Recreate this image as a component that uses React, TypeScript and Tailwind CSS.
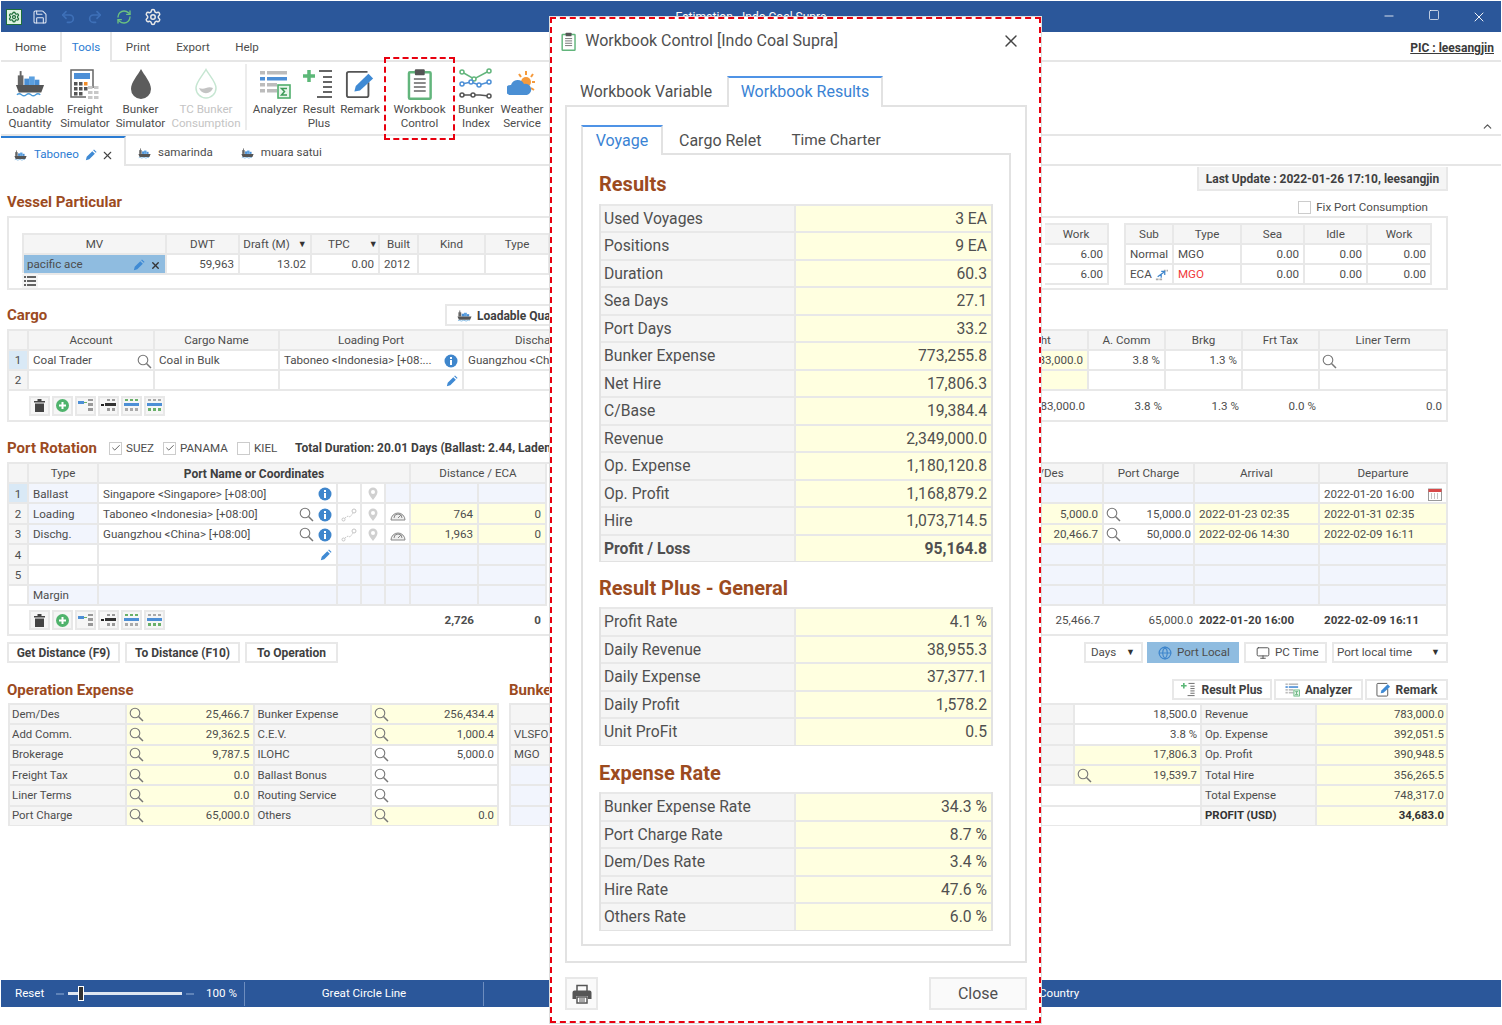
import React from "react";
import { Settings, RefreshCw, Save, Undo2, Redo2, Minus, Square, X, ChevronUp, Monitor, Globe, Check } from "lucide-react";

type CP = { className?: string; children?: React.ReactNode };

const Ship = ({ w = 32, h = 26 }: { w?: number; h?: number }) => (
  <svg width={w} height={h} viewBox="0 0 32 26" preserveAspectRatio="none">
    <rect x="5" y="1" width="2" height="8" fill="#666" />
    <rect x="3" y="5" width="6" height="9" fill="#666" />
    <rect x="10" y="8" width="5" height="6" fill="#4a8fd4" />
    <rect x="15" y="6" width="6" height="8" fill="#5ba0e0" />
    <rect x="21" y="9" width="5" height="5" fill="#4a8fd4" />
    <path d="M1 14H31L28 21H4Z" fill="#555" />
    <path d="M2 23q2.500-2 5 0t5 0 5 0 5 0 5 0" stroke="#4a9ad8" strokeWidth="1.400" fill="none" />
  </svg>
);
const Calc = () => (
  <svg width="32" height="32" viewBox="0 0 32 32">
    <path d="M24 20V2H2V29H17" fill="#fff" stroke="#666" strokeWidth="1.500" />
    <rect x="5" y="5" width="16" height="6" fill="#4d8fd6" />
    {[5, 10, 15].map((x) => [14, 19].map((y) => <rect key={`${x}${y}`} x={x} y={y} width="3.500" height="3.500" fill={x === 15 && y === 14 ? "#f28c28" : "#555"} />))}
    <rect x="5" y="24" width="3.500" height="3.500" fill="#555" />
    <rect x="10" y="24" width="3.500" height="3.500" fill="#555" />
    {[19, 25].map((x) => [19, 24, 29].map((y) => <rect key={`g${x}${y}`} x={x} y={y - 1} width="4.500" height="3" fill="#c8c8c8" />))}
  </svg>
);
const Drop = ({ light }: { light?: boolean }) =>
  light ? (
    <svg width="24" height="32" viewBox="0 0 24 32">
      <path d="M12 1.500C9 7 2 14 2 20a10 10 0 0 0 20 0C22 14 15 7 12 1.500Z" fill="#fff" stroke="#c6e6d2" strokeWidth="1.500" />
      <path d="M5 20q3.500 1.500 7 0t7 0a7.500 8 0 0 1-14 0Z" fill="#c4c4c4" />
    </svg>
  ) : (
    <svg width="24" height="32" viewBox="0 0 24 32">
      <path d="M12 1C9 7 2 14 2 21a10 10 0 0 0 20 0C22 14 15 7 12 1Z" fill="#5c5c5c" />
    </svg>
  );
const AnalyzerIcon = ({ s = 32 }: { s?: number }) => (
  <svg width={s} height={s} viewBox="0 0 32 32">
    {[3, 9, 15, 21].map((y, i) => (
      <g key={y}>
        <rect x="1" y={y} width="5" height="3.500" fill={i === 1 ? "#4d8fd6" : "#bcbcbc"} />
        <rect x="8" y={y} width={i > 1 ? 10 : 20} height="3.500" fill={i === 1 ? "#4d8fd6" : "#bcbcbc"} />
      </g>
    ))}
    <rect x="19" y="17" width="12" height="13" fill="#e8f6ec" stroke="#4fae6c" strokeWidth="1.600" />
    <path d="M28 20.500H22.500L25.500 23.500 22.500 27H28" fill="none" stroke="#3c9a58" strokeWidth="1.500" />
  </svg>
);
const ResultPlusIcon = ({ s = 32 }: { s?: number }) => (
  <svg width={s} height={s} viewBox="0 0 32 32">
    <path d="M6 2v12M0 8h12" stroke="#5cb878" strokeWidth="3.500" />
    <path d="M16 3h13M20 9h9M20 14h9M20 19h9M20 24h9M14 29h15" stroke="#666" strokeWidth="2" />
  </svg>
);
const RemarkIcon = ({ s = 32 }: { s?: number }) => (
  <svg width={s} height={s} viewBox="0 0 32 32">
    <path d="M25 14V28a2 2 0 0 1-2 2H4a2 2 0 0 1-2-2V5a2 2 0 0 1 2-2h20" fill="none" stroke="#555" strokeWidth="2" />
    <path d="M10 24l1.500-6L25 5l5 5L16 23Z" fill="#3f8ad4" />
  </svg>
);
const Clip = ({ s = 32 }: { s?: number }) => (
  <svg width={s * 0.8} height={s} viewBox="0 0 26 32">
    <rect x="2" y="4" width="22" height="27" rx="1" fill="#fff" stroke="#62b57c" strokeWidth="2.500" />
    <rect x="8" y="1" width="10" height="6" rx="1" fill="#555" />
    <path d="M7 11h12M7 15h12M7 19h12M7 23h12" stroke="#666" strokeWidth="1.500" />
  </svg>
);
const BunkerIdx = () => (
  <svg width="34" height="32" viewBox="0 0 34 32" fill="#fff" strokeWidth="1.500">
    <path d="M3 4l12 7 15-8" stroke="#62b57c" fill="none" />
    <path d="M3 16l9-2 8 3 10-3" stroke="#4d8fd6" fill="none" />
    <path d="M3 27h18l9 1" stroke="#555" fill="none" />
    {[[3, 4], [15, 11], [30, 3]].map(([x, y]) => <circle key={x} cx={x} cy={y} r="2" stroke="#62b57c" />)}
    {[[3, 16], [12, 14], [20, 17], [30, 14]].map(([x, y]) => <circle key={x} cx={x} cy={y} r="2" stroke="#4d8fd6" />)}
    {[[3, 27], [14, 27], [30, 28]].map(([x, y]) => <circle key={x} cx={x} cy={y} r="2" stroke="#555" />)}
  </svg>
);
const Weather = () => (
  <svg width="30" height="30" viewBox="0 0 30 30">
    <circle cx="19" cy="13" r="5" fill="#f59a3c" />
    <path d="M19 2v4M28 13h-3M12 5l2 3M26 5l-2 3M27 21l-3-2" stroke="#f59a3c" strokeWidth="2" />
    <path d="M3 26a5 5 0 0 1 1-10 7 7 0 0 1 13-1 5.500 5.500 0 0 1 3 11Z" fill="#4a8fd4" />
  </svg>
);
const Pencil = ({ s = 12 }: { s?: number }) => (
  <svg width={s} height={s} viewBox="0 0 14 14" className="shrink-0">
    <path d="M1 13l1-4 6.500-6.500 3 3L5 12Z M9.500 1.500l1-1 3 3-1 1Z" fill="#3f8ad4" />
  </svg>
);
const Info = () => (
  <svg width="14" height="14" viewBox="0 0 14 14" className="shrink-0">
    <circle cx="7" cy="7" r="6.500" fill="#3f86cc" />
    <rect x="6" y="6" width="2" height="5" fill="#fff" />
    <rect x="6" y="3" width="2" height="2" fill="#fff" />
  </svg>
);
const Mag = () => (
  <svg width="15" height="15" viewBox="0 0 15 15" fill="none" stroke="#777" className="shrink-0">
    <circle cx="6" cy="6" r="4.800" strokeWidth="1.100" />
    <path d="M9.500 9.500L14 14" strokeWidth="1.500" />
  </svg>
);
const Pin = () => (
  <svg width="12" height="14" viewBox="0 0 12 14">
    <path d="M6 13C4 10 1.500 8 1.500 5a4.500 4.500 0 0 1 9 0C10.500 8 8 10 6 13Z" fill="#d0d0d0" />
    <circle cx="6" cy="5" r="2" fill="#fff" />
  </svg>
);
const Route = () => (
  <svg width="16" height="14" viewBox="0 0 16 14" fill="none" stroke="#c4c4c4">
    <circle cx="2.500" cy="11.500" r="1.500" />
    <circle cx="13" cy="3" r="2" />
    <path d="M4 10l3-2 2 1 3-4" strokeDasharray="1.500 1" />
  </svg>
);
const Gauge = () => (
  <svg width="16" height="14" viewBox="0 0 16 14" fill="none" stroke="#888">
    <path d="M1 12a7 7 0 1 1 14 0Z" fill="#eee" />
    <path d="M4 10a4 4 0 0 1 8 0M8 10l3-3" />
  </svg>
);
const Calendar = () => (
  <svg width="14" height="14" viewBox="0 0 14 14">
    <rect x="0.500" y="2" width="13" height="11.500" fill="#fff" stroke="#999" />
    <rect x="0.500" y="2" width="13" height="3" fill="#d84a4a" />
    <path d="M3 7h1M6 7h1M9 7h1M3 9h1M6 9h1M9 9h1M3 11h1M6 11h1M9 11h1" stroke="#888" />
  </svg>
);
const PrinterIcon = () => (
  <svg width="20" height="20" viewBox="0 0 20 20">
    <path d="M5 7V1.500h10V7" fill="none" stroke="#555" strokeWidth="1.500" />
    <path d="M2.500 6.500h15a2 2 0 0 1 2 2V15h-3.500v-3H4v3H0.500V8.500a2 2 0 0 1 2-2Z" fill="#555" />
    <path d="M5 13h10v6H5Z" fill="#fff" stroke="#555" strokeWidth="1.500" />
    <path d="M7 15h6M7 17h6" stroke="#555" />
  </svg>
);

const Cell = ({ className = "", children }: CP) => (
  <div className={`flex items-center shrink-0 h-full px-[4px] pt-[2px] overflow-hidden whitespace-nowrap border-r-2 border-b-2 border-[#e8e8e8] ${className}`}>{children}</div>
);
const Row = ({ left, right, h = "h-[20px]" }: { left: React.ReactNode; right: React.ReactNode; h?: string }) => (
  <div className={`flex justify-between ${h}`}>
    <div className="flex h-full">{left}</div>
    <div className="flex h-full">{right}</div>
  </div>
);
const Heading = ({ className = "", children }: CP) => <div className={`font-bold text-[15px] leading-[18px] text-[#9c4b1f] ${className}`}>{children}</div>;
const Btn = ({ className = "", children }: CP) => (
  <div className={`flex items-center gap-[5px] border-2 border-[#e8e8e8] bg-white font-bold text-[12px] text-[#3f3f3f] whitespace-nowrap ${className}`}>{children}</div>
);
const CheckBox = ({ on }: { on?: boolean }) => (
  <div className="flex items-center justify-center w-[13px] h-[13px] border border-[#ccc] bg-white">{on && <Check size={10} strokeWidth={2} className="text-[#444]" />}</div>
);
const Arrow = () => <span className="text-[9px] text-[#333]">▼</span>;

const Tools = () => {
  const box = "flex items-center justify-center w-[21px] h-[20px] border-2 border-[#e8e8e8] bg-[#f6f6f6]";
  const bl = "#4d8fd6";
  return (
    <div className="flex gap-[2px]">
      <div className={box}>
        <svg width="11" height="13" viewBox="0 0 11 13"><path d="M0 2h11v1.500H0ZM3.500 0h4v2h-4ZM1 4.500h9V13H1Z" fill="#444" /></svg>
      </div>
      <div className={box}>
        <svg width="13" height="13" viewBox="0 0 13 13"><circle cx="6.500" cy="6.500" r="6.500" fill="#4fb36c" /><path d="M6.500 3v7M3 6.500h7" stroke="#fff" strokeWidth="2" /></svg>
      </div>
      <div className={box}>
        <svg width="15" height="13" viewBox="0 0 15 13"><path d="M0 2h6v3H0Z" fill={bl} /><path d="M6 3.500h3" stroke="#6ab06a" /><path d="M10 0h5v2h-5ZM10 4h5v3h-5ZM10 9h5v3h-5Z" fill="#999" /></svg>
      </div>
      <div className={box}>
        <svg width="15" height="13" viewBox="0 0 15 13"><path d="M0 5h3v2H0Z" fill="#222" /><path d="M4 4h11v3H4Z" fill="#333" /><path d="M6 0h3v2H6ZM11 0h3v2h-3ZM6 9h3v3H6ZM11 9h3v3h-3Z" fill="#999" /></svg>
      </div>
      <div className={box}>
        <svg width="15" height="13" viewBox="0 0 15 13"><path d="M1 0h3v2H1ZM6 0h3v2H6ZM11 0h3v2h-3Z" fill="#6ab06a" /><path d="M0 4h15v3H0Z" fill={bl} /><path d="M1 9h3v3H1ZM6 9h3v3H6ZM11 9h3v3h-3Z" fill="#aaa" /></svg>
      </div>
      <div className={box}>
        <svg width="15" height="13" viewBox="0 0 15 13"><path d="M1 0h3v2H1ZM6 0h3v2H6ZM11 0h3v2h-3Z" fill="#aaa" /><path d="M0 4h15v3H0Z" fill={bl} /><path d="M1 9h3v3H1ZM6 9h3v3H6ZM11 9h3v3h-3Z" fill="#6ab06a" /></svg>
      </div>
    </div>
  );
};

const RibbonItem = ({ className = "", icon, a, b, dim }: { className?: string; icon: React.ReactNode; a: string; b: string; dim?: boolean }) => (
  <div className={`flex flex-col items-center shrink-0 ${className}`}>
    <div className="flex items-center justify-center h-[38px] pt-[2px]">{icon}</div>
    <div className={`text-center leading-[14px] whitespace-nowrap ${dim ? "text-[#c4c4c4]" : ""}`}>
      {a}
      <br />
      {b}
    </div>
  </div>
);

const H = "bg-[#f5f5f5] justify-center";
const Y = "bg-[#ffffe0] justify-end";
const B = "bg-[#f2f5fd]";
const R = "justify-end";

const ModalTable = ({ className, rows }: { className: string; rows: [string, string, boolean?][] }) => (
  <div className={`flex flex-col w-[394px] border-x-2 border-[#e2e2e2] shadow-[0_1px_0_#e2e2e2] text-[15.7px] text-[#505050] ${className}`}>
    {rows.map(([l, v, b]) => (
      <div key={l} className={`flex flex-1 min-h-0 border-t-2 border-[#e8e8e8] ${b ? "font-bold" : ""}`}>
        <div className="flex items-center w-[195px] pl-[3px] bg-[#f5f5f5] border-r-2 border-[#e8e8e8]">{l}</div>
        <div className="flex flex-1 items-center justify-end pr-[4px] bg-[#ffffe0]">{v}</div>
      </div>
    ))}
  </div>
);
const ModalHeading = ({ className, children }: { className: string; children: React.ReactNode }) => (
  <div className={`flex items-end font-bold text-[20px] leading-[24px] text-[#9c4b1f] ${className}`}>{children}</div>
);

const OpRow = ({ a, b, c, d, dWhite }: { a: string; b: string; c: string; d: string; dWhite?: boolean }) => {
  const v = "flex flex-1 items-center justify-between h-full pl-[2px] pr-[3px] border-r-2 border-[#e8e8e8]";
  return (
    <div className="flex flex-1 min-h-0 border-t-2 border-[#e8e8e8]">
      <div className="flex items-center w-[117px] pl-[2px] bg-[#f5f5f5] border-r-2 border-[#e8e8e8]">{a}</div>
      <div className={`${v} max-w-[128px] bg-[#ffffe0]`}>
        <Mag />
        {b}
      </div>
      <div className="flex items-center w-[117px] pl-[3px] bg-[#f5f5f5] border-r-2 border-[#e8e8e8]">{c}</div>
      <div className={`${v} ${dWhite ? "bg-white" : "bg-[#ffffe0]"}`}>
        <Mag />
        {d}
      </div>
    </div>
  );
};

export default function App() {
  return (
    <div className="relative w-[1502px] h-[1025px] overflow-hidden bg-white pt-px pl-px text-[#4d4d4d] text-[11.6px] [font-family:Roboto,sans-serif]">
      <div className="flex flex-col w-[1500px] h-[1006px]">
        {/* title bar */}
        <div className="flex items-center shrink-0 h-[31px] bg-[#2b579a] text-white">
          <div className="flex items-center pl-[5px]">
            <div className="flex items-center justify-center w-[16px] h-[16px] bg-[#dff2e2] border border-[#1e6e3a]">
              <Settings size={12} strokeWidth={2.500} className="text-[#1e6e3a]" />
            </div>
            <Save size={16} strokeWidth={1.600} className="ml-[10px] text-[#dfe6f2]" />
            <Undo2 size={16} strokeWidth={2.500} className="ml-[12px] text-[#3e70b8]" />
            <Redo2 size={16} strokeWidth={2.500} className="ml-[11px] text-[#3e70b8]" />
            <RefreshCw size={16} strokeWidth={2} className="ml-[13px] text-[#6cc27f]" />
            <Settings size={18} strokeWidth={2} className="ml-[12px] text-[#e8e8e8]" />
          </div>
          <div className="flex-1 pr-[26px] text-center text-[12px]">Estimation - Indo Coal Supra</div>
          <div className="flex w-[135px]">
            <div className="flex flex-1 justify-center"><Minus size={14} strokeWidth={1.400} /></div>
            <div className="flex flex-1 justify-center"><Square size={12} strokeWidth={1.400} /></div>
            <div className="flex flex-1 justify-center"><X size={16} strokeWidth={1.400} /></div>
          </div>
        </div>
        {/* ribbon tabs */}
        <div className="flex shrink-0 items-stretch justify-between h-[30px] border-b-2 border-[#e6e6e6]">
          <div className="flex items-center">
            <div className="w-[59px] pt-[3px] text-center">Home</div>
            <div className="flex items-center justify-center self-start w-[52px] h-[30px] pt-[2px] border-x-2 border-[#e6e6e6] bg-white text-[#2b7cd3]">Tools</div>
            <div className="w-[52px] pt-[3px] text-center">Print</div>
            <div className="w-[58px] pt-[3px] text-center">Export</div>
            <div className="w-[50px] pt-[3px] text-center">Help</div>
          </div>
          <div className="flex items-center pr-[7px] pt-[3px] font-bold text-[12px] underline text-[#3a3a3a]">PIC : leesangjin</div>
        </div>
        {/* ribbon */}
        <div className="flex shrink-0 h-[74px] border-b-2 border-[#e6e6e6] pt-[2px] pl-[2px]">
          <RibbonItem className="w-[54px]" icon={<Ship w={30} h={28} />} a="Loadable" b="Quantity" />
          <RibbonItem className="w-[56px]" icon={<Calc />} a="Freight" b="Simulator" />
          <RibbonItem className="w-[55px]" icon={<Drop />} a="Bunker" b="Simulator" />
          <RibbonItem className="w-[76px]" icon={<Drop light />} a="TC Bunker" b="Consumption" dim />
          <div className="w-[2px] h-[66px] mx-px bg-[#ececec]" />
          <RibbonItem className="w-[54px]" icon={<AnalyzerIcon />} a="Analyzer" b="" />
          <RibbonItem className="w-[34px]" icon={<ResultPlusIcon />} a="Result" b="Plus" />
          <RibbonItem className="w-[48px]" icon={<RemarkIcon s={30} />} a="Remark" b="" />
          <RibbonItem className="w-[71px]" icon={<Clip />} a="Workbook" b="Control" />
          <RibbonItem className="w-[42px]" icon={<BunkerIdx />} a="Bunker" b="Index" />
          <RibbonItem className="w-[50px]" icon={<Weather />} a="Weather" b="Service" />
          <div className="flex flex-1 items-end justify-end pr-[7px] pb-[1px]">
            <ChevronUp size={13} strokeWidth={2.200} className="text-[#555]" />
          </div>
        </div>
        {/* document tabs */}
        <div className="flex shrink-0 items-stretch h-[30px] border-b-2 border-[#e6e6e6]">
          <div className="flex items-center w-[125px] h-[30px] pl-[13px] pt-[6px] border-t-2 border-r-2 border-t-[#2b7cd3] border-r-[#e6e6e6] bg-white">
            <Ship w={13} h={11} />
            <span className="ml-[7px] text-[#2b7cd3]">Taboneo</span>
            <span className="ml-[6px]"><Pencil /></span>
            <X size={13} strokeWidth={2} className="ml-[4px] text-[#444]" />
          </div>
          <div className="flex items-center pl-[12px] pt-[6px]"><Ship w={13} h={11} /><span className="ml-[7px]">samarinda</span></div>
          <div className="flex items-center pl-[28px] pt-[6px]"><Ship w={13} h={11} /><span className="ml-[7px]">muara satui</span></div>
        </div>

        {/* main */}
        <div className="flex flex-col flex-1 min-h-0 pl-[6px] pr-[53px]">
          {/* vessel */}
          <div className="flex justify-between h-[50px]">
            <div className="flex items-end pb-[5px]"><Heading>Vessel Particular</Heading></div>
            <div className="flex flex-col items-end">
              <div className="flex items-center justify-center w-[251px] h-[25px] mt-px pt-[3px] border-2 border-[#e8e8e8] border-t-0 bg-[#f5f5f5] font-bold text-[12px] text-[#3f3f3f]">Last Update : 2022-01-26 17:10, leesangjin</div>
              <div className="flex items-center gap-[5px] mt-[8px] pr-[20px]"><CheckBox />Fix Port Consumption</div>
            </div>
          </div>
          <div className="flex justify-between h-[74px] border-2 border-[#e8e8e8]">
            <div className="flex flex-col pl-[13px] pt-[15px]">
              <div className="h-[40px] border-t-2 border-l-2 border-[#e8e8e8]">
                <div className="flex h-[20px]">
                  <Cell className={`w-[143px] ${H}`}>MV</Cell>
                  <Cell className={`w-[73px] ${H}`}>DWT</Cell>
                  <Cell className={`w-[72px] ${H} gap-[8px]`}>Draft (M)<Arrow /></Cell>
                  <Cell className="w-[68px] bg-[#f5f5f5] !pl-[16px] gap-[19px]">TPC<Arrow /></Cell>
                  <Cell className={`w-[39px] ${H}`}>Built</Cell>
                  <Cell className={`w-[67px] ${H}`}>Kind</Cell>
                  <Cell className={`w-[64px] ${H}`}>Type</Cell>
                </div>
                <div className="flex h-[20px]">
                  <Cell className="w-[143px] !pl-[3px] bg-[#8fbce0] justify-between">pacific ace<span className="flex items-center gap-[5px]"><Pencil /><X size={11} strokeWidth={3} className="text-[#333]" /></span></Cell>
                  <Cell className={`w-[73px] ${R}`}>59,963</Cell>
                  <Cell className={`w-[72px] ${R}`}>13.02</Cell>
                  <Cell className={`w-[68px] ${R}`}>0.00</Cell>
                  <Cell className="w-[39px]">2012</Cell>
                  <Cell className="w-[67px]" />
                  <Cell className="w-[64px]" />
                </div>
              </div>
              <div className="flex items-center justify-center w-[16px] h-[14px] mt-px bg-[#f5f5f5]">
                <svg width="12" height="10" viewBox="0 0 12 10"><path d="M0 1h2M3 1h9M0 5h2M3 5h9M0 9h2M3 9h9" stroke="#333" strokeWidth="1.500" /></svg>
              </div>
            </div>
            <div className="flex items-start gap-[15px] pt-[5px] pr-[14px]">
              <div className="border-t-2 border-[#e8e8e8]">
                <div className="flex h-[20px]"><Cell className={`w-[64px] ${H}`}>Work</Cell></div>
                <div className="flex h-[20px]"><Cell className={`w-[64px] ${R}`}>6.00</Cell></div>
                <div className="flex h-[20px]"><Cell className={`w-[64px] ${R}`}>6.00</Cell></div>
              </div>
              <div className="border-t-2 border-l-2 border-[#e8e8e8]">
                <div className="flex h-[20px]">
                  <Cell className={`w-[48px] ${H}`}>Sub</Cell>
                  <Cell className={`w-[68px] ${H}`}>Type</Cell>
                  <Cell className={`w-[63px] ${H}`}>Sea</Cell>
                  <Cell className={`w-[63px] ${H}`}>Idle</Cell>
                  <Cell className={`w-[64px] ${H}`}>Work</Cell>
                </div>
                <div className="flex h-[20px]">
                  <Cell className="w-[48px]">Normal</Cell>
                  <Cell className="w-[68px]">MGO</Cell>
                  <Cell className={`w-[63px] ${R}`}>0.00</Cell>
                  <Cell className={`w-[63px] ${R}`}>0.00</Cell>
                  <Cell className={`w-[64px] ${R}`}>0.00</Cell>
                </div>
                <div className="flex h-[20px]">
                  <Cell className="w-[48px] gap-[3px]">ECA
                    <svg width="15" height="14" viewBox="0 0 15 14"><path d="M1 11h3v2H1ZM5 11h3v2H5ZM10 1h2v2h-2ZM13 1h2v2h-2Z" fill="#aaa" /><path d="M3 9l7-5M7 3h4v4M7 10V6" stroke="#3f86cc" fill="none" strokeWidth="1.400" /></svg>
                  </Cell>
                  <Cell className="w-[68px] text-[#f03a3a]">MGO</Cell>
                  <Cell className={`w-[63px] ${R}`}>0.00</Cell>
                  <Cell className={`w-[63px] ${R}`}>0.00</Cell>
                  <Cell className={`w-[64px] ${R}`}>0.00</Cell>
                </div>
              </div>
            </div>
          </div>

          {/* cargo */}
          <div className="flex items-end h-[39px]">
            <Heading className="w-[438px] pb-[5px]">Cargo</Heading>
            <Btn className="w-[150px] h-[22px] mb-[3px] pl-[10px] pt-[2px]"><Ship w={15} h={12} />Loadable Quantity</Btn>
          </div>
          <div className="flex flex-col h-[93px] border-2 border-[#e8e8e8]">
            <Row
              left={<>
                <Cell className={`w-[20px] ${H}`} />
                <Cell className={`w-[126px] ${H}`}>Account</Cell>
                <Cell className={`w-[125px] ${H}`}>Cargo Name</Cell>
                <Cell className={`w-[184px] ${H}`}>Loading Port</Cell>
                <Cell className={`w-[190px] ${H}`}>Discharging Port</Cell>
              </>}
              right={<>
                <Cell className={`w-[110px] ${H}`}>Freight</Cell>
                <Cell className={`w-[77px] ${H}`}>A. Comm</Cell>
                <Cell className={`w-[77px] ${H}`}>Brkg</Cell>
                <Cell className={`w-[77px] ${H}`}>Frt Tax</Cell>
                <Cell className={`w-[126px] ${H} !border-r-0`}>Liner Term</Cell>
              </>}
            />
            <Row
              left={<>
                <Cell className="w-[20px] bg-[#d9e9f6] justify-center">1</Cell>
                <Cell className="w-[126px] justify-between !pr-[1px]">Coal Trader<Mag /></Cell>
                <Cell className="w-[125px]">Coal in Bulk</Cell>
                <Cell className="w-[184px] justify-between">Taboneo &lt;Indonesia&gt; [+08:...<Info /></Cell>
                <Cell className="w-[190px]">Guangzhou &lt;China&gt; [+08:00]</Cell>
              </>}
              right={<>
                <Cell className={`w-[110px] ${Y}`}>783,000.0</Cell>
                <Cell className={`w-[77px] ${R}`}>3.8 %</Cell>
                <Cell className={`w-[77px] ${R}`}>1.3 %</Cell>
                <Cell className="w-[77px]" />
                <Cell className="w-[126px] !border-r-0 !pl-[2px]"><Mag /></Cell>
              </>}
            />
            <Row
              left={<>
                <Cell className="w-[20px] bg-[#f5f5f5] justify-center">2</Cell>
                <Cell className="w-[126px]" />
                <Cell className="w-[125px]" />
                <Cell className="w-[184px] justify-end"><Pencil /></Cell>
                <Cell className="w-[190px]" />
              </>}
              right={<>
                <Cell className="w-[110px] bg-[#ffffe0]" />
                <Cell className="w-[77px]" />
                <Cell className="w-[77px]" />
                <Cell className="w-[77px]" />
                <Cell className="w-[126px] !border-r-0" />
              </>}
            />
            <div className="flex justify-between items-center flex-1 pl-[20px]">
              <Tools />
              <div className="flex justify-end pt-[2px]">
                <div className="w-[110px] text-right pr-[4px]">783,000.0</div>
                <div className="w-[77px] text-right pr-[4px]">3.8 %</div>
                <div className="w-[77px] text-right pr-[4px]">1.3 %</div>
                <div className="w-[77px] text-right pr-[4px]">0.0 %</div>
                <div className="w-[126px] text-right pr-[4px]">0.0</div>
              </div>
            </div>
          </div>

          {/* port rotation */}
          <div className="flex items-end h-[40px] whitespace-nowrap">
            <Heading className="w-[102px] pb-[5px]">Port Rotation</Heading>
            <div className="flex items-center gap-[4px] w-[54px] pb-[5px]"><CheckBox on />SUEZ</div>
            <div className="flex items-center gap-[4px] w-[74px] pb-[5px]"><CheckBox on />PANAMA</div>
            <div className="flex items-center gap-[4px] w-[58px] pb-[5px]"><CheckBox />KIEL</div>
            <div className="pb-[5px] font-bold text-[12px] text-[#3f3f3f]">Total Duration: 20.01 Days (Ballast: 2.44, Laden: 17.57)</div>
          </div>
          <div className="flex flex-col h-[174px] border-2 border-[#e8e8e8]">
            <Row
              left={<>
                <Cell className={`w-[20px] ${H}`} />
                <Cell className={`w-[70px] ${H}`}>Type</Cell>
                <Cell className={`w-[312px] ${H} font-bold text-[12px] text-[#3f3f3f]`}>Port Name or Coordinates</Cell>
                <Cell className={`w-[136px] ${H}`}>Distance / ECA</Cell>
              </>}
              right={<>
                <Cell className={`w-[127px] ${H}`}>Dem/Des</Cell>
                <Cell className={`w-[91px] ${H}`}>Port Charge</Cell>
                <Cell className={`w-[125px] ${H}`}>Arrival</Cell>
                <Cell className={`w-[126px] ${H} !border-r-0`}>Departure</Cell>
              </>}
            />
            <Row
              h="h-[20.4px]"
              left={<>
                <Cell className="w-[20px] bg-[#d9e9f6] justify-center">1</Cell>
                <Cell className={`w-[70px] ${B}`}>Ballast</Cell>
                <Cell className="w-[239px] justify-between">Singapore &lt;Singapore&gt; [+08:00]<Info /></Cell>
                <Cell className="w-[24px]" />
                <Cell className="w-[24px] justify-center"><Pin /></Cell>
                <Cell className={`w-[25px] ${B}`} />
                <Cell className={`w-[68px] ${B}`} />
                <Cell className={`w-[68px] ${B}`} />
              </>}
              right={<>
                <Cell className={`w-[127px] ${B}`} />
                <Cell className={`w-[91px] ${B}`} />
                <Cell className={`w-[125px] ${B}`} />
                <Cell className="w-[126px] justify-between !border-r-0">2022-01-20 16:00<Calendar /></Cell>
              </>}
            />
            {[
              ["2", "Loading", "Taboneo <Indonesia> [+08:00]", "764", "5,000.0", "15,000.0", "2022-01-23 02:35", "2022-01-31 02:35"],
              ["3", "Dischg.", "Guangzhou <China> [+08:00]", "1,963", "20,466.7", "50,000.0", "2022-02-06 14:30", "2022-02-09 16:11"],
            ].map((r) => (
              <Row
                key={r[0]}
                h="h-[20.4px]"
                left={<>
                  <Cell className="w-[20px] bg-[#f5f5f5] justify-center">{r[0]}</Cell>
                  <Cell className={`w-[70px] ${B}`}>{r[1]}</Cell>
                  <Cell className="w-[239px] justify-between">{r[2]}<span className="flex items-center gap-[4px]"><Mag /><Info /></span></Cell>
                  <Cell className="w-[24px] justify-center !px-0"><Route /></Cell>
                  <Cell className="w-[24px] justify-center"><Pin /></Cell>
                  <Cell className="w-[25px] justify-center !px-0"><Gauge /></Cell>
                  <Cell className={`w-[68px] ${Y}`}>{r[3]}</Cell>
                  <Cell className={`w-[68px] ${Y}`}>0</Cell>
                </>}
                right={<>
                  <Cell className={`w-[127px] ${Y}`}>{r[4]}</Cell>
                  <Cell className="w-[91px] justify-between !pl-[2px] !pr-[2px]"><Mag />{r[5]}</Cell>
                  <Cell className="w-[125px] bg-[#ffffe0]">{r[6]}</Cell>
                  <Cell className="w-[126px] bg-[#ffffe0] !border-r-0">{r[7]}</Cell>
                </>}
              />
            ))}
            {["4", "5", ""].map((n) => (
              <Row
                key={n || "m"}
                h="h-[20.4px]"
                left={<>
                  <Cell className={`w-[20px] justify-center ${n ? "bg-[#f5f5f5]" : ""}`}>{n}</Cell>
                  <Cell className={`w-[70px] ${n ? "" : B}`}>{n ? "" : "Margin"}</Cell>
                  <Cell className={`w-[239px] justify-end ${n ? "" : B}`}>{n === "4" && <Pencil />}</Cell>
                  <Cell className={`w-[24px] ${B}`} />
                  <Cell className={`w-[24px] ${B}`} />
                  <Cell className={`w-[25px] ${B}`} />
                  <Cell className={`w-[68px] ${B}`} />
                  <Cell className={`w-[68px] ${B}`} />
                </>}
                right={<>
                  <Cell className={`w-[127px] ${B}`} />
                  <Cell className={`w-[91px] ${B}`} />
                  <Cell className={`w-[125px] ${B}`} />
                  <Cell className={`w-[126px] ${B} !border-r-0`} />
                </>}
              />
            ))}
            <div className="flex justify-between items-center flex-1 pl-[20px]">
              <div className="flex items-center">
                <Tools />
                <div className="w-[309px] pt-[2px] text-right font-bold">2,726</div>
                <div className="w-[67px] pt-[2px] text-right font-bold">0</div>
              </div>
              <div className="flex pt-[2px]">
                <div className="w-[127px] text-right pr-[4px]">25,466.7</div>
                <div className="w-[91px] text-right pr-[2px]">65,000.0</div>
                <div className="w-[125px] pl-[4px] font-bold text-[#3f3f3f]">2022-01-20 16:00</div>
                <div className="w-[126px] pl-[4px] font-bold text-[#3f3f3f]">2022-02-09 16:11</div>
              </div>
            </div>
          </div>

          {/* buttons */}
          <div className="flex justify-between h-[21px] mt-[6px]">
            <div className="flex">
              <Btn className="justify-center w-[113px]">Get Distance (F9)</Btn>
              <Btn className="justify-center w-[115px] ml-[5px]">To Distance (F10)</Btn>
              <Btn className="justify-center w-[93px] ml-[5px]">To Operation</Btn>
            </div>
            <div className="flex">
              <div className="flex items-center justify-between w-[59px] pl-[5px] pr-[6px] border-2 border-[#e8e8e8]">Days<Arrow /></div>
              <div className="flex items-center w-[92px] ml-[4px] pl-[11px] gap-[5px] bg-[#8fbce0]"><Globe size={14} strokeWidth={2} className="text-[#3f86cc]" />Port Local</div>
              <div className="flex items-center w-[83px] ml-[5px] pl-[10px] gap-[5px] border-2 border-[#e8e8e8]"><Monitor size={14} strokeWidth={1.600} />PC Time</div>
              <div className="flex items-center justify-between w-[116px] ml-[5px] pl-[3px] pr-[6px] border-2 border-[#e8e8e8]">Port local time<Arrow /></div>
            </div>
          </div>

          {/* op expense head */}
          <div className="flex justify-between items-end h-[40px]">
            <div className="flex">
              <Heading className="w-[502px] pb-[4px]">Operation Expense</Heading>
              <Heading className="pb-[4px]">Bunker Expense</Heading>
            </div>
            <div className="flex pb-[3px]">
              <Btn className="justify-center w-[100px] h-[21px]"><ResultPlusIcon s={15} />Result Plus</Btn>
              <Btn className="justify-center w-[89px] h-[21px] ml-[2px]"><AnalyzerIcon s={15} />Analyzer</Btn>
              <Btn className="justify-center w-[83px] h-[21px] ml-[2px]"><RemarkIcon s={15} />Remark</Btn>
            </div>
          </div>

          {/* op tables */}
          <div className="flex justify-between h-[122px] text-[11.4px]">
            <div className="flex items-start">
              <div className="flex flex-col w-[491px] h-[122px] ml-px border-l-2 shadow-[0_1px_0_#e8e8e8] border-[#e8e8e8]">
                <OpRow a="Dem/Des" b="25,466.7" c="Bunker Expense" d="256,434.4" />
                <OpRow a="Add Comm." b="29,362.5" c="C.E.V." d="1,000.4" />
                <OpRow a="Brokerage" b="9,787.5" c="ILOHC" d="5,000.0" dWhite />
                <OpRow a="Freight Tax" b="0.0" c="Ballast Bonus" d="" dWhite />
                <OpRow a="Liner Terms" b="0.0" c="Routing Service" d="" dWhite />
                <OpRow a="Port Charge" b="65,000.0" c="Others" d="0.0" />
              </div>
              <div className="flex flex-col w-[60px] h-[122px] ml-[10px] border-l-2 shadow-[0_1px_0_#e8e8e8] border-[#e8e8e8]">
                {["", "VLSFO", "MGO", "", "", ""].map((t, i) => (
                  <div key={i} className={`flex flex-1 items-center pl-[3px] border-t-2 border-[#e8e8e8] ${i > 2 ? B : "bg-[#f5f5f5]"}`}>{t}</div>
                ))}
              </div>
            </div>
            <div className="flex flex-col w-[409px] h-[122px] border-r-2 shadow-[0_1px_0_#e8e8e8] border-[#e8e8e8]">
              {[
                ["18,500.0", "Revenue", "783,000.0", 0],
                ["3.8 %", "Op. Expense", "392,051.5", 0],
                ["17,806.3", "Op. Profit", "390,948.5", 1],
                ["19,539.7", "Total Hire", "356,265.5", 2],
                ["", "Total Expense", "748,317.0", 3],
                ["", "PROFIT (USD)", "34,683.0", 3],
              ].map((r, i) => {
                const [v, l, t, k] = r as [string, string, string, number];
                return (
                  <div key={l} className={`flex flex-1 min-h-0 border-t-2 border-[#e8e8e8] ${i === 5 ? "font-bold text-[#333]" : ""}`}>
                    <div className={`w-[34px] ${k === 3 ? "bg-white" : "bg-[#f5f5f5]"}`} />
                    <div className={`flex items-center justify-between w-[129px] pl-[2px] pr-[3px] border-x-2 ${k === 3 ? "border-transparent" : "border-[#e8e8e8]"} ${k === 1 || k === 2 ? "bg-[#ffffe0]" : "bg-white"}`}>
                      {k === 2 ? <Mag /> : <span />}
                      {v}
                    </div>
                    <div className="flex items-center w-[117px] pl-[3px] bg-[#f5f5f5] border-r-2 border-l-2 -ml-[2px] border-[#e8e8e8]">{l}</div>
                    <div className="flex flex-1 items-center justify-end pr-[2px] bg-[#ffffe0]">{t}</div>
                  </div>
                );
              })}
            </div>
          </div>
        </div>

        {/* status bar */}
        <div className="flex items-center shrink-0 h-[27px] bg-[#2b579a] text-white">
          <span className="ml-[14px] w-[41px]">Reset</span>
          <div className="flex items-center w-[140px]">
            <div className="w-[8px] h-[2px] bg-[#5f83b8]" />
            <div className="relative w-[114px] h-[3px] ml-[4px] bg-[#dfe7f2]">
              <div className="absolute left-[10px] top-[-6px] w-[6px] h-[15px] bg-[#333] border border-white" />
            </div>
            <div className="w-[8px] h-[2px] ml-[4px] bg-[#5f83b8]" />
          </div>
          <span className="w-[38px] ml-[10px]">100 %</span>
          <div className="w-px h-[24px] bg-[#6d8dbf]" />
          <span className="w-[238px] text-center">Great Circle Line</span>
          <div className="w-px h-[24px] bg-[#6d8dbf]" />
          <span className="ml-[555px]">Country</span>
        </div>
      </div>

      {/* workbook highlight */}
      <div className="absolute left-[384px] top-[57px] w-[71px] h-[83px] border-2 border-dashed border-[#e8000f]" />

      {/* modal */}
      <div className="absolute left-[550px] top-[17px] flex flex-col w-[491px] h-[1006px] pl-[13px] pr-[12px] bg-white border-2 border-dashed border-[#e8000f] shadow-[0_0_0_1px_#dddddd] text-[16px] text-[#505050]">
        <div className="flex items-start shrink-0 justify-between h-[57px] pt-[12px]">
          <div className="flex items-center gap-[9px] -ml-[4px] leading-[20px]"><Clip s={19} />Workbook Control [Indo Coal Supra]</div>
          <X size={20} strokeWidth={1.700} className="mr-[6px] text-[#444]" />
        </div>
        <div className="flex shrink-0 h-[29px]">
          <div className="flex items-center w-[162px] pl-[15px] pt-[2px] text-[15.8px]">Workbook Variable</div>
          <div className="flex items-center justify-center w-[156px] h-[31px] pb-[2px] z-10 bg-white border-t-2 border-x-2 border-t-[#4f93e6] border-x-[#e2e2e2] text-[#3a83d4]">Workbook Results</div>
        </div>
        <div className="flex flex-col shrink-0 h-[858px] pl-[14px] pt-[18px] border-2 border-[#e2e2e2]">
          <div className="flex shrink-0 h-[28px]">
            <div className="flex items-center justify-center w-[82px] h-[30px] z-10 bg-white border-t-2 border-x-2 border-t-[#4f93e6] border-x-[#e2e2e2] text-[#3a83d4]">Voyage</div>
            <div className="flex items-center ml-[16px] pt-[4px]">Cargo Relet</div>
            <div className="flex items-center ml-[30px] pt-[4px] text-[15.4px]">Time Charter</div>
          </div>
          <div className="flex flex-col w-[430px] h-[793px] pl-[16px] border-2 border-[#e2e2e2]">
            <ModalHeading className="h-[49px] pb-[8px]">Results</ModalHeading>
            <ModalTable
              className="h-[357px]"
              rows={[
                ["Used Voyages", "3 EA"],
                ["Positions", "9 EA"],
                ["Duration", "60.3"],
                ["Sea Days", "27.1"],
                ["Port Days", "33.2"],
                ["Bunker Expense", "773,255.8"],
                ["Net Hire", "17,806.3"],
                ["C/Base", "19,384.4"],
                ["Revenue", "2,349,000.0"],
                ["Op. Expense", "1,180,120.8"],
                ["Op. Profit", "1,168,879.2"],
                ["Hire", "1,073,714.5"],
                ["Profit / Loss", "95,164.8", true],
              ]}
            />
            <ModalHeading className="h-[46px] pb-[7px]">Result Plus - General</ModalHeading>
            <ModalTable
              className="h-[138px]"
              rows={[
                ["Profit Rate", "4.1 %"],
                ["Daily Revenue", "38,955.3"],
                ["Daily Expense", "37,377.1"],
                ["Daily Profit", "1,578.2"],
                ["Unit ProFit", "0.5"],
              ]}
            />
            <ModalHeading className="h-[47px] pb-[7px]">Expense Rate</ModalHeading>
            <ModalTable
              className="h-[138px]"
              rows={[
                ["Bunker Expense Rate", "34.3 %"],
                ["Port Charge Rate", "8.7 %"],
                ["Dem/Des Rate", "3.4 %"],
                ["Hire Rate", "47.6 %"],
                ["Others Rate", "6.0 %"],
              ]}
            />
          </div>
        </div>
        <div className="flex shrink-0 justify-between mt-[14px]">
          <div className="flex items-center justify-center w-[33px] h-[33px] border-2 border-[#e8e8e8] bg-[#fafafa]">
            <PrinterIcon />
          </div>
          <div className="flex items-center justify-center w-[98px] h-[33px] border-2 border-[#e8e8e8] bg-[#fafafa]">Close</div>
        </div>
      </div>
    </div>
  );
}
